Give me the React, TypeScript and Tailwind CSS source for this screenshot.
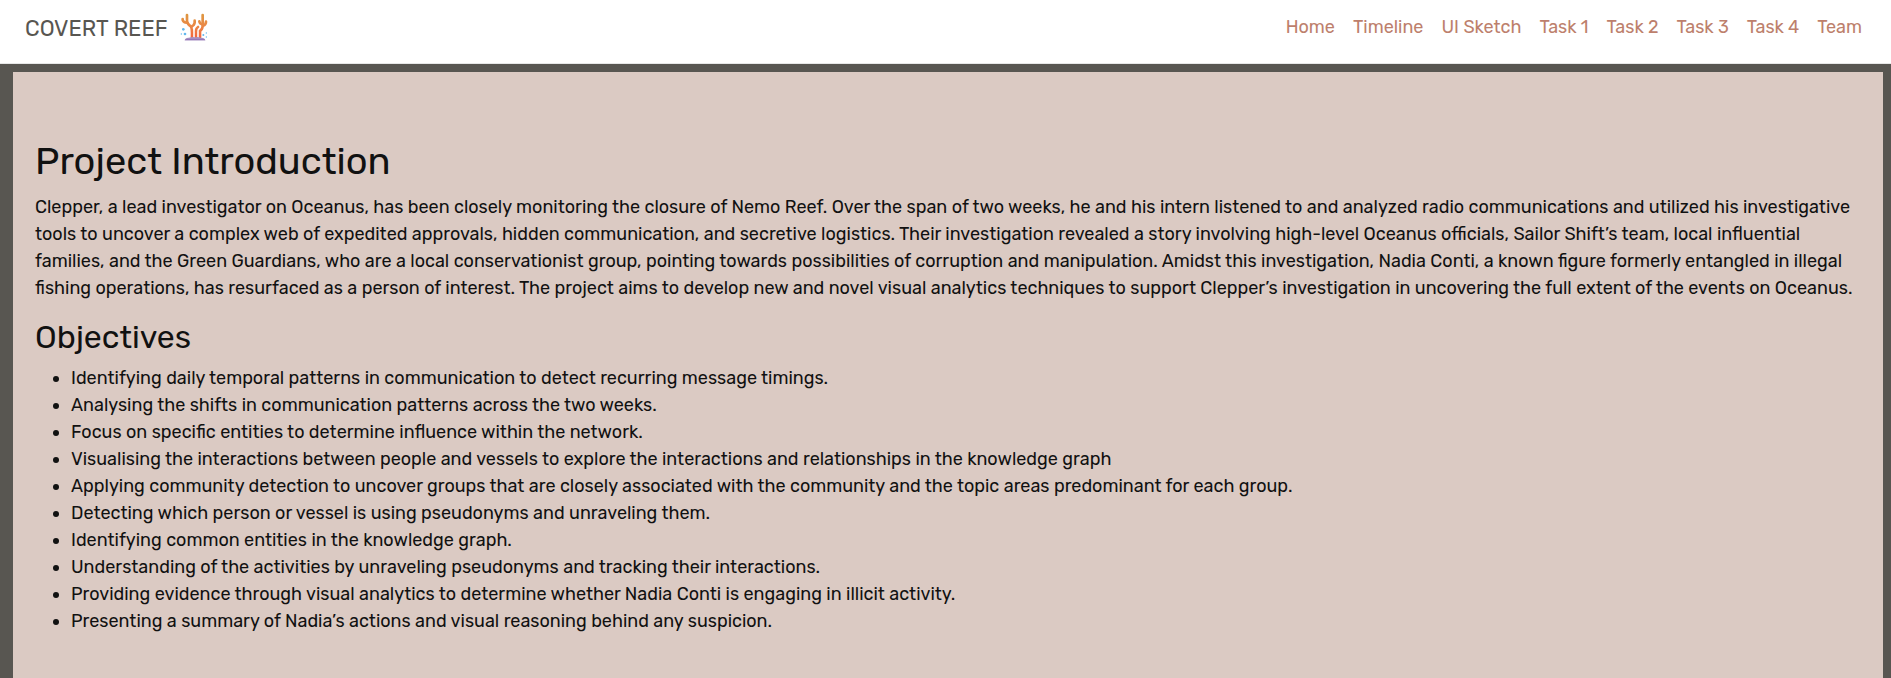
const links = ["Home", "Timeline", "UI Sketch", "Task 1", "Task 2", "Task 3", "Task 4", "Team"];

const objectives = [
  "Identifying daily temporal patterns in communication to detect recurring message timings.",
  "Analysing the shifts in communication patterns across the two weeks.",
  "Focus on specific entities to determine influence within the network.",
  "Visualising the interactions between people and vessels to explore the interactions and relationships in the knowledge graph",
  "Applying community detection to uncover groups that are closely associated with the community and the topic areas predominant for each group.",
  "Detecting which person or vessel is using pseudonyms and unraveling them.",
  "Identifying common entities in the knowledge graph.",
  "Understanding of the activities by unraveling pseudonyms and tracking their interactions.",
  "Providing evidence through visual analytics to determine whether Nadia Conti is engaging in illicit activity.",
  "Presenting a summary of Nadia’s actions and visual reasoning behind any suspicion.",
];

function CoralIcon() {
  return (
    <svg viewBox="28 25 84 84" className="size-7" aria-hidden="true">
      <defs>
        <linearGradient id="coral" gradientUnits="userSpaceOnUse" x1="0" y1="26" x2="0" y2="102">
          <stop offset="0" stopColor="#dd9840" />
          <stop offset="0.5" stopColor="#ea8746" />
          <stop offset="1" stopColor="#f4633c" />
        </linearGradient>
      </defs>
      <g fill="none" stroke="url(#coral)" strokeWidth="8" strokeLinecap="round" strokeLinejoin="round">
        <path d="M49 31V50Q51 60 60 65Q65 70 64 98" />
        <path d="M36 43V46Q38 54 49 54" />
        <path d="M72 48V54Q71 62 62 66" />
        <path d="M96 31V64Q95 75 88 79V98" />
        <path d="M106 51Q106 60 97 63" />
        <path d="M86 50Q87 57 95 59" />
        <path d="M82 67Q76 71 76 78V98" />
      </g>
      <path d="M70 74V98M82 80V98" stroke="#fdeee4" strokeWidth="3" fill="none" />
      <path d="M42 107Q44 98 55 99Q64 95 73 98Q82 95 91 99Q102 98 104 107Z" fill="#a58fc0" />
      <path d="M42 107Q44 104 50 104H98Q103 104 104 107Z" fill="#8f6fb5" />
      <g fill="#62b8ee">
        <circle cx="38" cy="74" r="4" />
        <circle cx="43" cy="88" r="4" />
        <circle cx="32" cy="88" r="2" />
        <circle cx="98" cy="91" r="3" />
        <circle cx="107" cy="85" r="2" />
        <circle cx="107" cy="97" r="2" />
      </g>
    </svg>
  );
}

export default function App() {
  return (
    <div className="flex min-h-screen flex-col bg-[#585651] font-['Rubik','Roboto',sans-serif] text-[18px] leading-[27px] text-[#111111]">
      <header className="flex h-16 items-start justify-between border-b border-[#e7e7e7] bg-white pt-[13px] pr-[29px] pl-[25px]">
        <a href="#" className="flex items-start gap-3 text-[22px] leading-8 text-[#585651]">
          <span>COVERT REEF</span>
          <CoralIcon />
        </a>
        <nav className="flex gap-[18px] pt-px text-[#bd7f6c]">
          {links.map((label) => (
            <a key={label} href="#">
              {label}
            </a>
          ))}
        </nav>
      </header>
      <main className="mt-2 mr-2 ml-[13px] grow bg-[#dbcac3] px-[22px] pt-[66px] pb-8">
        <h1 className="text-[38px] leading-[46px]">Project Introduction</h1>
        <p className="mt-[10px]">
          Clepper, a lead investigator on Oceanus, has been closely monitoring the closure of Nemo Reef. Over the
          span of two weeks, he and his intern listened to and analyzed radio communications and utilized his
          investigative tools to uncover a complex web of expedited approvals, hidden communication, and secretive
          logistics. Their investigation revealed a story involving high-level Oceanus officials, Sailor Shift’s
          team, local influential families, and the Green Guardians, who are a local conservationist group, pointing
          towards possibilities of corruption and manipulation. Amidst this investigation, Nadia Conti, a known
          figure formerly entangled in illegal fishing operations, has resurfaced as a person of interest. The
          project aims to develop new and novel visual analytics techniques to support Clepper’s investigation in
          uncovering the full extent of the events on Oceanus.
        </p>
        <h2 className="mt-4 text-[32px] leading-[38px]">Objectives</h2>
        <ul className="mt-[9px] list-disc pl-9">
          {objectives.map((item) => (
            <li key={item}>{item}</li>
          ))}
        </ul>
      </main>
    </div>
  );
}
